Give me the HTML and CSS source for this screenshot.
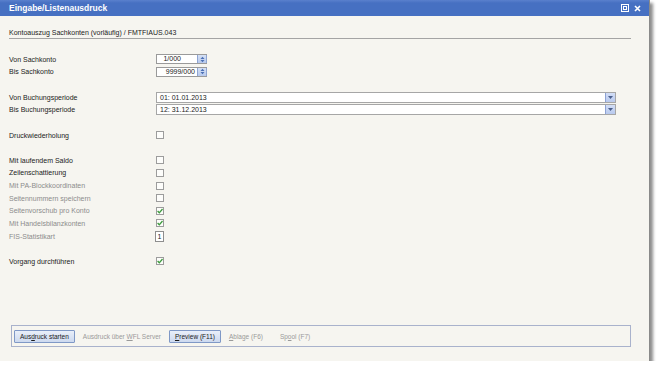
FILE: index.html
```html
<!DOCTYPE html>
<html lang="de">
<head>
  <meta charset="UTF-8" />
  <title>Eingabe/Listenausdruck</title>
  <link rel="stylesheet" href="styles.css">
</head>
<body>

  <div class="window">
    <div class="titlebar">
      <span class="title">Eingabe/Listenausdruck</span>
      <span class="tb-icons">
        <svg width="8" height="8" viewBox="0 0 8 8"><rect x="0.5" y="0.5" width="7" height="7" fill="none" stroke="#fff"/><rect x="2.5" y="2.5" width="3" height="3" fill="none" stroke="#fff"/></svg>
        <svg width="7" height="7" viewBox="0 0 7 7"><path d="M1 1 L6 6 M6 1 L1 6" stroke="#fff" stroke-width="1.6"/></svg>
      </span>
    </div>

    <div class="content">
      <div class="heading">Kontoauszug Sachkonten (vorläufig) / FMTFIAUS.043</div>

      <div class="form">
        <div class="row">
          <span class="label">Von Sachkonto</span>
          <span class="spin-field"><span class="spin-value short">1/000</span><span class="spin-btn"><svg width="5" height="7" viewBox="0 0 5 7"><path d="M0.5 3 L2.5 0.8 L4.5 3 Z M0.5 4 L2.5 6.2 L4.5 4 Z" fill="#4a6fb5"/></svg></span></span>
        </div>
        <div class="row">
          <span class="label">Bis Sachkonto</span>
          <span class="spin-field"><span class="spin-value">9999/000</span><span class="spin-btn"><svg width="5" height="7" viewBox="0 0 5 7"><path d="M0.5 3 L2.5 0.8 L4.5 3 Z M0.5 4 L2.5 6.2 L4.5 4 Z" fill="#4a6fb5"/></svg></span></span>
        </div>
        <div class="row"></div>
        <div class="row">
          <span class="label">Von Buchungsperiode</span>
          <span class="combo"><span class="combo-value">01: 01.01.2013</span><span class="combo-btn"><svg width="5" height="3" viewBox="0 0 5 3"><path d="M0 0 H5 L2.5 3 Z" fill="#4a5f8c"/></svg></span></span>
        </div>
        <div class="row">
          <span class="label">Bis Buchungsperiode</span>
          <span class="combo"><span class="combo-value">12: 31.12.2013</span><span class="combo-btn"><svg width="5" height="3" viewBox="0 0 5 3"><path d="M0 0 H5 L2.5 3 Z" fill="#4a5f8c"/></svg></span></span>
        </div>
        <div class="row"></div>
        <div class="row">
          <span class="label">Druckwiederholung</span>
          <span class="check"></span>
        </div>
        <div class="row"></div>
        <div class="row">
          <span class="label">Mit laufendem Saldo</span>
          <span class="check"></span>
        </div>
        <div class="row">
          <span class="label">Zeilenschattierung</span>
          <span class="check"></span>
        </div>
        <div class="row disabled">
          <span class="label">Mit PA-Blockkoordinaten</span>
          <span class="check"></span>
        </div>
        <div class="row disabled">
          <span class="label">Seitennummern speichern</span>
          <span class="check"></span>
        </div>
        <div class="row disabled">
          <span class="label">Seitenvorschub pro Konto</span>
          <span class="check"><svg width="6" height="6" viewBox="0 0 6 6"><path d="M0.6 3 L2.3 4.8 L5.5 1" fill="none" stroke="#3c9a3c" stroke-width="1.3"/></svg></span>
        </div>
        <div class="row disabled">
          <span class="label">Mit Handelsbilanzkonten</span>
          <span class="check"><svg width="6" height="6" viewBox="0 0 6 6"><path d="M0.6 3 L2.3 4.8 L5.5 1" fill="none" stroke="#3c9a3c" stroke-width="1.3"/></svg></span>
        </div>
        <div class="row disabled">
          <span class="label">FIS-Statistikart</span>
          <span class="numbox">1</span>
        </div>
        <div class="row"></div>
        <div class="row">
          <span class="label">Vorgang durchführen</span>
          <span class="check"><svg width="6" height="6" viewBox="0 0 6 6"><path d="M0.6 3 L2.3 4.8 L5.5 1" fill="none" stroke="#3c9a3c" stroke-width="1.3"/></svg></span>
        </div>
      </div>

      <div class="buttonbar">
        <span class="btn">Aus<u>d</u>ruck starten</span>
        <span class="btn off">Ausdruck über <u>W</u>FL Server</span>
        <span class="btn"><u>P</u>review (F11)</span>
        <span class="btn off"><u>A</u>blage (F6)</span>
        <span class="btn off">Sp<u>o</u>ol (F7)</span>
      </div>
    </div>
  </div>

</body>
</html>
```

FILE: styles.css
```css
body {
  margin: 0;
  background-color: #ffffff;
  font-family: "Liberation Sans", Arial, sans-serif;
  font-size: 7px;
  color: #222;
}

.window {
  width: 650px;
  height: 361px;
  background-color: #f6f5f0;
  border-right: 1px solid #8a8a8a;
  box-shadow: 3px 3px 3px rgba(0, 0, 0, 0.45);
  display: flex;
  flex-direction: column;
  box-sizing: border-box;
}

.titlebar {
  height: 16px;
  background: linear-gradient(#5a80cd, #4670c2 3px, #4670c2);
  color: white;
  display: flex;
  align-items: center;
  justify-content: space-between;
  padding: 0 8px 0 9px;
}

.title {
  font-weight: bold;
  font-size: 8.5px;
}

.tb-icons {
  display: flex;
  align-items: center;
  gap: 5px;
}

.tb-icons svg {
  display: block;
}

/* form area */
.content {
  flex: 1;
  display: flex;
  flex-direction: column;
  padding: 0 18px 14px 0;
}

.heading {
  margin: 12px 0 0 9px;
  line-height: 10px;
  border-bottom: 1px solid #a4a4a4;
}

.form {
  margin-top: 14px;
  padding-left: 9px;
}

.row {
  height: 12.625px;
  display: flex;
  align-items: center;
}

.label {
  width: 147px;
  flex-shrink: 0;
}

.row.disabled .label {
  color: #8c8c8c;
}

.spin-field {
  width: 51px;
  height: 10px;
  box-sizing: border-box;
  border: 1px solid #9a9a9a;
  border-right: none;
  background: white;
  display: flex;
  align-items: stretch;
}

.spin-value {
  flex: 1;
  text-align: right;
  line-height: 8px;
  padding-right: 2px;
}

.spin-value.short {
  padding-right: 16px;
}

.spin-btn {
  width: 8px;
  background: linear-gradient(#d6e1f5, #b7c9ec);
  border-left: 1px solid #8ea4d2;
  border-right: 1px solid #8ea4d2;
  display: flex;
  align-items: center;
  justify-content: center;
}

.combo {
  width: 460px;
  height: 11px;
  box-sizing: border-box;
  border: 1px solid #a6a6a6;
  background: white;
  display: flex;
}

.combo-value {
  flex: 1;
  padding-left: 3px;
  line-height: 9px;
}

.combo-btn {
  width: 9px;
  background: linear-gradient(#d3def6, #b8c9ee);
  border-left: 1px solid #8da2d4;
  display: flex;
  align-items: center;
  justify-content: center;
}

.check {
  width: 8px;
  height: 8px;
  box-sizing: border-box;
  border: 1px solid #9c9c9c;
  background: #fdfdfb;
  display: flex;
  align-items: center;
  justify-content: center;
}

.numbox {
  width: 9px;
  height: 11px;
  box-sizing: border-box;
  border: 1px solid #8e8e8e;
  background: white;
  color: #222;
  text-align: center;
  line-height: 9px;
  margin-left: -1px;
}

/* bottom buttons */
.buttonbar {
  margin: auto 0 0 11px;
  height: 22px;
  box-sizing: border-box;
  border: 1px solid #a9b2cc;
  display: flex;
  align-items: center;
  padding: 0 2px;
  gap: 2px;
}

.btn {
  height: 13px;
  box-sizing: border-box;
  padding: 0 5px;
  font-size: 6.5px;
  line-height: 11px;
  border: 1px solid #7f98c6;
  border-radius: 1px;
  background: linear-gradient(#e9eff9, #cdd9ef);
  color: #1a1a1a;
}

.btn.off {
  border-color: transparent;
  background: none;
  color: #9a9a9a;
}

.btn.off + .btn.off {
  margin-left: 3px;
}
```
